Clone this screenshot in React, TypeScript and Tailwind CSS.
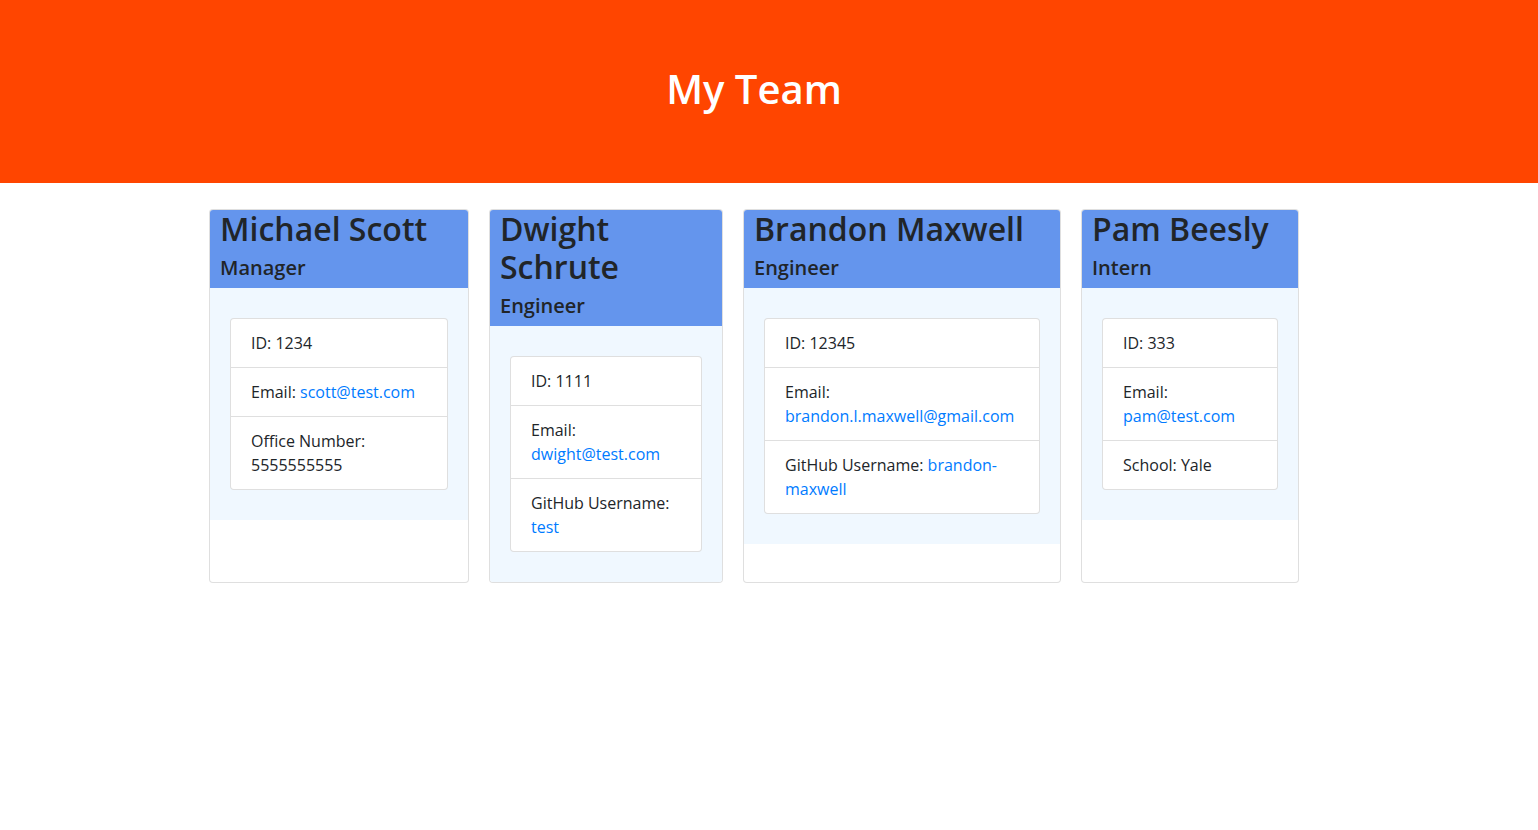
const team = [
  {
    name: "Michael Scott",
    role: "Manager",
    width: "w-[260px]",
    id: "1234",
    email: "scott@test.com",
    extra: { label: "Office Number:", value: "5555555555", link: false },
  },
  {
    name: "Dwight Schrute",
    role: "Engineer",
    width: "w-[234px]",
    id: "1111",
    email: "dwight@test.com",
    extra: { label: "GitHub Username:", value: "test", link: true },
  },
  {
    name: "Brandon Maxwell",
    role: "Engineer",
    width: "w-[318px]",
    id: "12345",
    email: "brandon.l.maxwell@gmail.com",
    extra: { label: "GitHub Username:", value: "brandon-maxwell", link: true },
  },
  {
    name: "Pam Beesly",
    role: "Intern",
    width: "w-[218px]",
    id: "333",
    email: "pam@test.com",
    extra: { label: "School:", value: "Yale", link: false },
  },
];

export default function App() {
  return (
    <div className="min-h-screen bg-white text-[#212529] font-['Open_Sans',sans-serif]">
      {/* Header */}
      <header className="bg-[#ff4500] h-[183px]">
        <div className="w-[1508px] h-full flex items-center justify-center pb-[5px]">
          <h1 className="text-[40px] leading-[1.2] font-semibold text-white">My Team</h1>
        </div>
      </header>

      {/* Cards */}
      <main className="w-[1508px] pt-[26px] flex justify-center gap-5">
        {team.map((member) => (
          <div
            key={member.id}
            className={`${member.width} border border-black/[.125] rounded bg-white overflow-hidden`}
          >
            <div className="bg-[#6495ed] px-[10px]">
              <h2 className="text-[32px] leading-[38px] font-semibold mb-2">{member.name}</h2>
              <h5 className="text-[20px] leading-6 font-semibold pb-2">{member.role}</h5>
            </div>
            <div className="bg-[#f0f8ff] px-5 py-[30px]">
              <ul className="bg-white border border-black/[.125] rounded text-[16px] leading-6">
                <li className="px-5 py-3 border-b border-black/[.125]">ID: {member.id}</li>
                <li className="px-5 py-3 border-b border-black/[.125]">
                  Email: <a className="text-[#007bff]">{member.email}</a>
                </li>
                <li className="px-5 py-3">
                  {member.extra.label}{" "}
                  {member.extra.link ? (
                    <a className="text-[#007bff]">{member.extra.value}</a>
                  ) : (
                    member.extra.value
                  )}
                </li>
              </ul>
            </div>
          </div>
        ))}
      </main>
    </div>
  );
}
